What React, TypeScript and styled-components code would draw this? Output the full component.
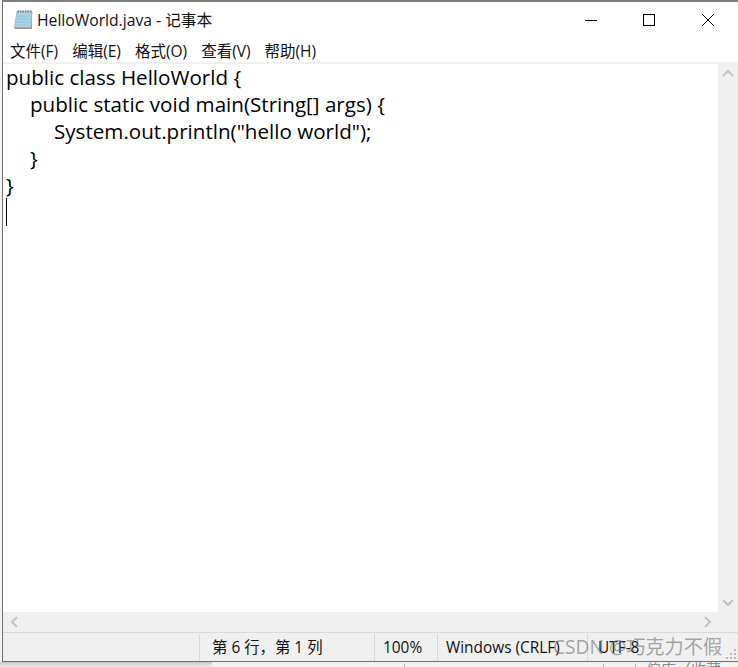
import React from "react";
import styled, { createGlobalStyle } from "styled-components";

const Global = createGlobalStyle`
  html, body { margin: 0; padding: 0; background: #f3f3f3; width: 738px; height: 667px; overflow: hidden; }
  #root { width: 738px; height: 667px; }
`;
const UI = `"Open Sans", "Noto Sans CJK SC", sans-serif`;

const Page = styled.div`
  position: relative;
  width: 738px;
  height: 667px;
  background: #f3f3f3;
  overflow: hidden;
  display: flex;
  flex-direction: column;
`;
const Win = styled.div`
  width: 736px;
  height: 662px;
  flex: none;
  margin-left: 2px;
  box-sizing: border-box;
  border-top: 2px solid #808080;
  border-left: 1px solid #6f6f6f;
  border-bottom: 1px solid #6f6f6f;
  background: #fff;
  display: flex;
  flex-direction: column;
`;
const TitleBar = styled.div`
  height: 35px;
  padding: 0 0 3px 10px;
  flex: none;
  display: flex;
  align-items: center;
  background: #fff;
`;
const AppIcon = styled.svg`
  width: 21px;
  height: 22px;
  flex: none;
`;
const Title = styled.div`
  margin-left: 3px;
  font: 15.7px ${UI};
  color: #111;
  white-space: nowrap;
`;
const WinButtons = styled.div`
  margin-left: auto;
  display: flex;
  align-items: center;
  padding-right: 20px;
  gap: 38.500px;
`;
const GlyphSvg = styled.svg`
  width: 20px;
  height: 20px;
  display: block;
`;
const MenuBar = styled.div`
  height: 22px;
  box-sizing: border-box;
  padding: 0 0 2px 7px;
  flex: none;
  display: flex;
  align-items: center;
  gap: 14px;
  background: #fff;
`;
const MenuItem = styled.span`
  font: 15.5px ${UI};
  color: #111;
  white-space: nowrap;
`;
const Middle = styled.div`
  flex: 1;
  min-height: 0;
  display: flex;
  border-top: 2px solid #f0f0f0;
`;
const Editor = styled.div`
  flex: 1;
  min-width: 0;
  padding-left: 3px;
  background: #fff;
  color: #000;
  font: 20.6px/27px ${UI};
`;
const CodeLine = styled.div<{ $indent: number }>`
  height: 27px;
  padding-left: ${(p) => p.$indent * 24}px;
  white-space: pre;
`;
const Caret = styled.div`
  width: 1px;
  height: 28px;
  background: #000;
  margin-top: -1px;
`;
const VScroll = styled.div`
  width: 20px;
  flex: none;
  background: #f0f0f0;
  display: flex;
  flex-direction: column;
  justify-content: space-between;
  align-items: center;
  padding: 4px 0;
  box-sizing: border-box;
`;
const HScroll = styled.div`
  height: 20px;
  flex: none;
  background: #f0f0f0;
  display: flex;
  justify-content: space-between;
  align-items: center;
  padding: 0 25px 0 6px;
`;
const Arrow = styled.svg`
  width: 12px;
  height: 12px;
  display: block;
`;
const StatusBar = styled.div`
  height: 29px;
  flex: none;
  display: flex;
  background: #f0f0f0;
  border-top: 1px solid #d9d9d9;
  box-sizing: border-box;
  padding-top: 1px;
  padding-left: 196px;
`;
const Cell = styled.div<{ $w: number; $pad: number }>`
  width: ${(p) => p.$w}px;
  flex: none;
  box-sizing: border-box;
  border-left: 1px solid #d9d9d9;
  padding-left: ${(p) => p.$pad}px;
  font: 15.400px/27px ${UI};
  color: #111;
  white-space: nowrap;
`;
const Grip = styled.svg`
  position: absolute;
  left: 725px;
  top: 648px;
  width: 12px;
  height: 12px;
`;
const Watermark = styled.div`
  position: absolute;
  left: 553px;
  top: 634px;
  font: 19.200px/26px ${UI};
  color: rgba(110,110,110,.6);
  white-space: nowrap;
`;
const BelowStrip = styled.div`
  flex: 1;
  display: flex;
  overflow: hidden;
`;
const Shadow = styled.div`
  width: 212px;
  flex: none;
  background: linear-gradient(#c9c9c9, #ececec);
`;
const Tick = styled.div<{ $gap: number }>`
  width: 1px;
  height: 3px;
  flex: none;
  align-self: flex-end;
  margin-left: ${(p) => p.$gap}px;
  background: #a8a8a8;
`;
const CutText = styled.div`
  margin: -4px 0 0 10px;
  font: 15px/22px ${UI};
  color: #8c8c8c;
  white-space: nowrap;
`;

const Chevron = ({ d }: { d: string }) => (
  <Arrow viewBox="0 0 12 12">
    <path d={d} fill="none" stroke="#c2c2c2" strokeWidth="2" />
  </Arrow>
);

export default function App() {
  return (
    <Page>
      <Global />
      <Win>
        <TitleBar>
          <AppIcon viewBox="0 0 21 22">
            <path d="M4 2.500h15l-1.500 16H1.500z" fill="#a9d5e6" stroke="#7fb3c9" strokeWidth=".8" />
            <path d="M4.500 7h12.500M4 10h12.500M3.500 13h12.500M3 16h12.500" stroke="#8fc0d6" strokeWidth="1" />
            <path d="M1.500 18.500h16.500l1-15.500v17H1.500z" fill="#a3957a" />
            <path d="M4.500 2.500h14" stroke="#84949f" strokeWidth="2.500" strokeDasharray="1.500 1" />
          </AppIcon>
          <Title>HelloWorld.java - 记事本</Title>
          <WinButtons>
            <GlyphSvg viewBox="0 0 20 20"><path d="M4 10.500h12" stroke="#000" strokeWidth="1" /></GlyphSvg>
            <GlyphSvg viewBox="0 0 20 20"><rect x="3.500" y="4.500" width="11" height="11" fill="none" stroke="#000" strokeWidth="1" /></GlyphSvg>
            <GlyphSvg viewBox="0 0 20 20"><path d="M4 4l12 12M16 4L4 16" stroke="#000" strokeWidth="1" /></GlyphSvg>
          </WinButtons>
        </TitleBar>
        <MenuBar>
          <MenuItem>文件(F)</MenuItem>
          <MenuItem>编辑(E)</MenuItem>
          <MenuItem>格式(O)</MenuItem>
          <MenuItem>查看(V)</MenuItem>
          <MenuItem>帮助(H)</MenuItem>
        </MenuBar>
        <Middle>
          <Editor>
            <CodeLine $indent={0}>public class HelloWorld {"{"}</CodeLine>
            <CodeLine $indent={1}>public static void main(String[] args) {"{"}</CodeLine>
            <CodeLine $indent={2}>System.out.println("hello world");</CodeLine>
            <CodeLine $indent={1}>{"}"}</CodeLine>
            <CodeLine $indent={0}>{"}"}</CodeLine>
            <Caret />
          </Editor>
          <VScroll>
            <Chevron d="M1 8l5-5 5 5" />
            <Chevron d="M1 4l5 5 5-5" />
          </VScroll>
        </Middle>
        <HScroll>
          <Chevron d="M8 1L3 6l5 5" />
          <Chevron d="M4 1l5 5-5 5" />
        </HScroll>
        <StatusBar>
          <Cell $w={175} $pad={12}>第 6 行，第 1 列</Cell>
          <Cell $w={63} $pad={8}>100%</Cell>
          <Cell $w={150} $pad={8}>Windows (CRLF)</Cell>
          <Cell $w={100} $pad={10}>UTF-8</Cell>
        </StatusBar>
      </Win>
      <BelowStrip>
        <Shadow />
        <Tick $gap={192} />
        <Tick $gap={198} />
        <Tick $gap={31} />
        <CutText>偏库（收藏</CutText>
      </BelowStrip>
      <Grip viewBox="0 0 12 12" fill="#b9b9b9">
        <rect x="9" y="1" width="2" height="2" />
        <rect x="5" y="5" width="2" height="2" />
        <rect x="9" y="5" width="2" height="2" />
        <rect x="1" y="9" width="2" height="2" />
        <rect x="5" y="9" width="2" height="2" />
        <rect x="9" y="9" width="2" height="2" />
      </Grip>
      <Watermark>CSDN @巧克力不假</Watermark>
    </Page>
  );
}
